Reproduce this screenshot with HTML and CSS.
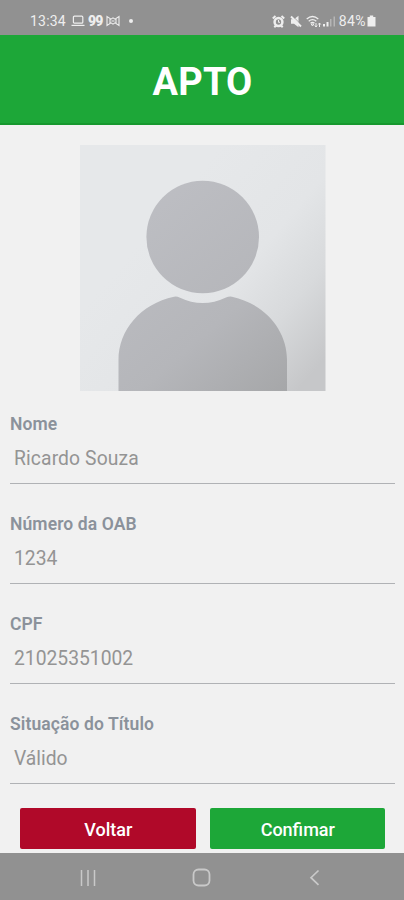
FILE: index.html
```html
<!DOCTYPE html>
<html lang="pt-BR">
<head>
<meta charset="utf-8">
<title>APTO</title>
<link rel="stylesheet" href="styles.css">
</head>
<body>
<div class="screen">
  <div class="status">
    <div class="status-left">
      <span class="clock">13:34</span>
      <svg class="laptop" width="14" height="12" viewBox="0 0 14 12" fill="none" stroke="currentColor" stroke-width="1.2"><rect x="2.4" y="1.2" width="9.4" height="7" rx="1"/><path d="M.5 10.4h13"/></svg>
      <span class="quote">99</span>
      <svg class="bow" width="14" height="12" viewBox="0 0 14 12" fill="none" stroke="currentColor" stroke-width="1.1"><path d="M1 1.5v9l4-2.7 2 1.4 2-1.4 4 2.7v-9L9 4.200 7 2.800 5 4.200zM4 3.500v5M10 3.500v5M5.500 6h3"/></svg>
      <span class="dot"></span>
    </div>
    <div class="status-right">
      <svg width="13" height="13" viewBox="0 0 13 13" fill="none" stroke="currentColor"><circle cx="6.500" cy="7" r="3.900" stroke-width="2.500"/><path d="M.8 3.500 3.500 1.100M12.200 3.500 9.500 1.100M2.300 12.200l1.700-1.700M10.700 12.200 9 10.500" stroke-width="2"/><path d="M6.500 5v2.300H8" stroke-width="1"/></svg>
      <svg class="mute" width="12" height="13" viewBox="0 0 12 13"><path d="M1 4.200h3L8.500.8v11.400L4 8.800H1z" fill="currentColor"/><path d="M2.500 1 11.500 10" stroke="#919191" stroke-width=".9"/><path d="M1 1.500l10 10" stroke="currentColor" stroke-width="1.900"/></svg>
      <svg class="wifi" width="16" height="13" viewBox="0 0 16 13" fill="none" stroke="currentColor" stroke-width="1.300"><path d="M.7 4q5.800-5 11.600 0M2.700 6.200q3.800-3.200 7.600 0M4.500 8.200q2-1.600 4 0"/><path d="M5.200 9h2.600l-1.300 2zM10 8v4M8.800 10.500l1.200 1.500 1.200-1.500M13.500 12V8M12.300 9.500 13.500 8l1.200 1.500" stroke-width="1"/></svg>
      <svg class="signal" width="13" height="12" viewBox="0 0 13 12" fill="currentColor"><path d="M0 9h2v2.500H0zM3.500 7h2v4.500h-2z"/><path d="M7 4h1.500v7.500H7zM10.500 1.500H12v10h-1.500z" opacity=".4"/></svg>
      <span class="battery-text">84%</span>
      <svg width="9" height="12" viewBox="0 0 9 12" fill="currentColor"><path d="M2.800.5h3.400V2H8.500v9.500h-8V2h2.300z"/></svg>
    </div>
  </div>
  <header class="header"><h1>APTO</h1></header>
  <main class="content">
    <svg class="avatar" width="246" height="246" viewBox="0 0 246 246">
      <defs>
        <linearGradient id="backdrop" gradientUnits="userSpaceOnUse" x1="70" y1="85" x2="235" y2="225"><stop offset="0" stop-color="#e6e8ea"/><stop offset=".45" stop-color="#e3e5e7"/><stop offset=".72" stop-color="#d8dadc"/><stop offset="1" stop-color="#c6c7c9"/></linearGradient>
        <linearGradient id="person" gradientUnits="userSpaceOnUse" x1="50" y1="65" x2="205" y2="246"><stop offset="0" stop-color="#bdbec3"/><stop offset=".6" stop-color="#b5b6ba"/><stop offset="1" stop-color="#a6a7a9"/></linearGradient>
      </defs>
      <rect width="245.500" height="246" fill="url(#backdrop)"/>
      <circle cx="122.700" cy="92" r="56.300" fill="url(#person)"/>
      <path d="M38.500 246v-31c0-30 22-56 55.500-63.300q3-.5 5.500.8Q122.700 163.500 146 152.500q3-1.300 6-.8c33 7.300 55 33.300 55 63.300v31z" fill="url(#person)"/>
    </svg>
    <div class="fields">
      <div class="field"><div class="label">Nome</div><div class="value name">Ricardo Souza</div></div>
      <div class="field"><div class="label">Número da OAB</div><div class="value">1234</div></div>
      <div class="field"><div class="label">CPF</div><div class="value">21025351002</div></div>
      <div class="field"><div class="label">Situação do Título</div><div class="value">Válido</div></div>
    </div>
    <div class="actions">
      <button class="button back">Voltar</button>
      <button class="button confirm">Confimar</button>
    </div>
  </main>
  <nav class="nav">
    <svg width="18" height="18" viewBox="0 0 18 18" stroke="currentColor" stroke-width="1.500"><path d="M2.500 1v16M9 1v16M15.500 1v16"/></svg>
    <svg width="20" height="20" viewBox="0 0 20 20" fill="none" stroke="currentColor" stroke-width="1.800"><rect x="1.500" y="1.500" width="16" height="16" rx="5"/></svg>
    <svg width="18" height="18" viewBox="0 0 18 18" fill="none" stroke="currentColor" stroke-width="1.700"><path d="M12.500 1.500 5 8.700l7.500 7.200"/></svg>
  </nav>
</div>
</body>
</html>
```

FILE: styles.css
```css
* { box-sizing: border-box; }
body { margin: 0; background: #f1f1f1; font-family: Roboto, "Liberation Sans", sans-serif; }
.screen { width: 404px; height: 900px; display: flex; flex-direction: column; overflow: hidden; }
.status { height: 35px; flex: none; background: #919191; color: #eee; display: flex; justify-content: space-between; align-items: center; padding: 7px 28px 0 30px; font-size: 14px; }
.status svg { display: block; flex: none; }
.status-left, .status-right { display: flex; align-items: center; }
.clock { width: 41px; letter-spacing: .2px; }
.quote { font-size: 14px; font-weight: 900; width: 18px; margin-left: 3px; letter-spacing: -.8px; }
.dot { width: 4px; height: 4px; border-radius: 50%; background: #eee; margin-left: 9px; }
.mute { margin-left: 5px; }
.wifi { margin-left: 4px; }
.signal { margin-left: 1px; }
.battery-text { margin: 0 1px 0 3px; letter-spacing: .4px; }
.header { height: 90px; flex: none; background: #1da738; border-bottom: 2px solid #17982e; display: flex; align-items: center; justify-content: center; padding: 6px 0 0 1px; }
.header h1 { margin: 0; color: #fff; font-size: 38px; line-height: 44px; font-weight: 700; letter-spacing: .2px; }
.content { flex: 1; min-height: 0; display: flex; flex-direction: column; padding: 20px 9px 0 10px; }
.avatar { display: block; flex: none; margin-left: 70px; }
.fields { margin-top: 20px; }
.field { height: 100px; }
.label { height: 26px; line-height: 27px; font-size: 17.500px; font-weight: 600; color: #8b929b; letter-spacing: .1px; white-space: nowrap; }
.value { height: 47px; line-height: 43px; padding-left: 4px; font-size: 19.300px; color: #949494; border-bottom: 1.500px solid #b0b2b5; white-space: nowrap; }
.name { letter-spacing: .12px; }
.actions { display: flex; gap: 14px; padding: 0 10px; margin-top: -3px; }
.button { flex: 1; height: 41px; padding: 2px 0 0 1px; border: 0; border-radius: 2px; color: #fff; font: 500 18px/39px Roboto, "Liberation Sans", sans-serif; }
.back { background: #b00929; }
.confirm { background: #1da738; }
.nav { height: 47px; flex: none; background: #919191; color: #c9c9c9; display: flex; justify-content: space-between; align-items: center; padding: 2px 80px 0 79px; }
```
